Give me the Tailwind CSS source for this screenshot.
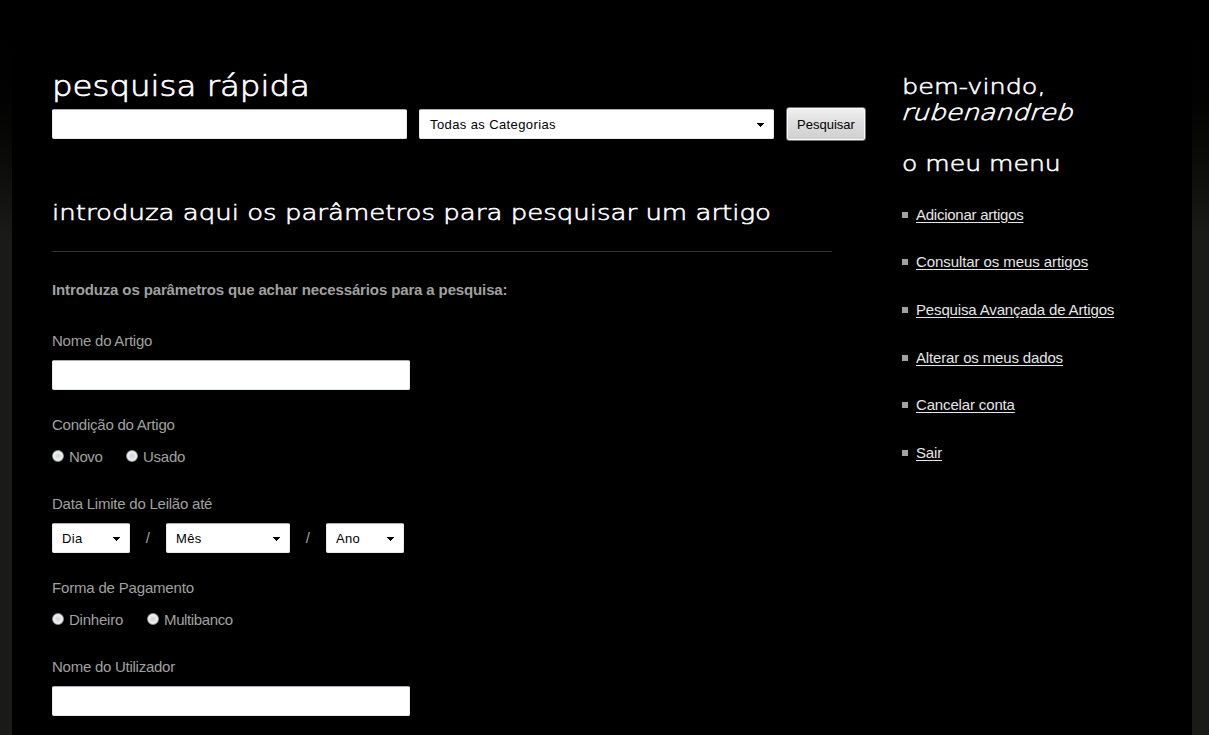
<!DOCTYPE html>
<html lang="pt">
<head>
<meta charset="utf-8">
<title>Pesquisa de artigos</title>
<script src="https://cdn.jsdelivr.net/npm/@tailwindcss/browser@4"></script>
</head>
<body class="h-[735px] overflow-hidden bg-[#1a1a18] bg-linear-to-b from-black from-0% to-[#1a1a18] to-[235px] px-3 pr-[17px] font-['Liberation_Sans',Arial,sans-serif] text-[15px] leading-5 text-[#a1a1a1]">
<div class="flex h-[735px] w-[1180px] bg-black pl-10">
  <main class="w-[850px] pt-[70px] tracking-[-0.23px]">
    <h1 class="h-[39px] whitespace-nowrap font-['DejaVu_Sans',sans-serif] text-[28px] leading-[34px] font-extralight tracking-normal text-white [-webkit-text-stroke:0.7px_white]"><span class="inline-block origin-left scale-x-[1.158]">pesquisa rápida</span></h1>
    <form class="-mt-[2px] flex h-[34px] items-center gap-3 text-[13px] tracking-normal text-black">
      <input aria-label="Pesquisa" class="h-[30px] w-[355px] rounded-[2px] border border-[#e3e9ef] border-t-[#abadb3] bg-white">
      <div class="flex h-[30px] w-[355px] items-center justify-between rounded-[2px] border border-[#e3e9ef] border-t-[#abadb3] bg-white pr-[9px] pl-[10px]"><span class="pt-0.5 tracking-[0.39px]">Todas as Categorias</span><svg class="mt-px h-1 w-[7px]" viewBox="0 0 7 4" shape-rendering="crispEdges"><path d="M0 0H7V1H6V2H5V3H4V4H3V3H2V2H1V1H0Z"/></svg></div>
      <button type="button" class="h-[34px] w-20 rounded-[3px] border border-[#707070] bg-linear-to-b from-[#f2f2f2] from-0% via-[#dddddd] via-50% to-[#cfcfcf] to-100% pt-px text-center shadow-[inset_0_0_0_1px_#fcfcfc]"><span>Pesquisar</span></button>
    </form>
    <h2 class="mt-[57px] h-[54px] w-[780px] whitespace-nowrap border-b border-[#333] pt-px font-['DejaVu_Sans',sans-serif] text-[22px] leading-7 font-extralight tracking-normal text-white [-webkit-text-stroke:0.6px_white]"><span class="inline-block origin-left scale-x-[1.182]">introduza aqui os parâmetros para pesquisar um artigo</span></h2>
    <p class="mt-7 font-bold tracking-[-0.13px]"><span>Introduza os parâmetros que achar necessários para a pesquisa:</span></p>
    <label class="mt-[31px] block"><span>Nome do Artigo</span></label>
    <input aria-label="Nome do Artigo" class="mt-[9px] block h-[30px] w-[358px] rounded-[2px] border border-[#e3e9ef] border-t-[#abadb3] bg-white">
    <p class="mt-[25px]"><span>Condição do Artigo</span></p>
    <div class="mt-3 flex h-5 items-center gap-[25px]">
      <label class="flex items-center gap-[5px]"><i class="-mt-[2px] size-3 rounded-full border border-[#8e8f8f] bg-radial from-[#cfd3d8] to-[#f4f4f4] to-70% shadow-[inset_0_0_0_1px_#f4f4f4]"></i><span class="w-8 tracking-[-0.4px]">Novo</span></label>
      <label class="flex items-center gap-[5px]"><i class="-mt-[2px] size-3 rounded-full border border-[#8e8f8f] bg-radial from-[#cfd3d8] to-[#f4f4f4] to-70% shadow-[inset_0_0_0_1px_#f4f4f4]"></i><span>Usado</span></label>
    </div>
    <p class="mt-[27px]"><span>Data Limite do Leilão até</span></p>
    <div class="mt-[9px] flex h-[30px] items-center text-[13px] tracking-[0.3px] text-black">
      <div class="flex h-[30px] w-[78px] items-center justify-between rounded-[2px] border border-[#e3e9ef] border-t-[#abadb3] bg-white pr-[9px] pl-[9px]"><span class="pt-0.5">Dia</span><svg class="mt-px h-1 w-[7px]" viewBox="0 0 7 4" shape-rendering="crispEdges"><path d="M0 0H7V1H6V2H5V3H4V4H3V3H2V2H1V1H0Z"/></svg></div>
      <span class="w-9 text-center text-[15px] text-[#a1a1a1]">/</span>
      <div class="flex h-[30px] w-[124px] items-center justify-between rounded-[2px] border border-[#e3e9ef] border-t-[#abadb3] bg-white pr-[9px] pl-[9px]"><span class="pt-0.5">Mês</span><svg class="mt-px h-1 w-[7px]" viewBox="0 0 7 4" shape-rendering="crispEdges"><path d="M0 0H7V1H6V2H5V3H4V4H3V3H2V2H1V1H0Z"/></svg></div>
      <span class="w-9 text-center text-[15px] text-[#a1a1a1]">/</span>
      <div class="flex h-[30px] w-[78px] items-center justify-between rounded-[2px] border border-[#e3e9ef] border-t-[#abadb3] bg-white pr-[9px] pl-[9px]"><span class="pt-0.5">Ano</span><svg class="mt-px h-1 w-[7px]" viewBox="0 0 7 4" shape-rendering="crispEdges"><path d="M0 0H7V1H6V2H5V3H4V4H3V3H2V2H1V1H0Z"/></svg></div>
    </div>
    <p class="mt-[25px]"><span class="tracking-[-0.18px]">Forma de Pagamento</span></p>
    <div class="mt-3 flex h-5 items-center gap-6">
      <label class="flex items-center gap-[5px]"><i class="-mt-[2px] size-3 rounded-full border border-[#8e8f8f] bg-radial from-[#cfd3d8] to-[#f4f4f4] to-70% shadow-[inset_0_0_0_1px_#f4f4f4]"></i><span>Dinheiro</span></label>
      <label class="flex items-center gap-[5px]"><i class="-mt-[2px] size-3 rounded-full border border-[#8e8f8f] bg-radial from-[#cfd3d8] to-[#f4f4f4] to-70% shadow-[inset_0_0_0_1px_#f4f4f4]"></i><span class="tracking-[-0.38px]">Multibanco</span></label>
    </div>
    <label class="mt-[27px] block"><span class="tracking-[-0.26px]">Nome do Utilizador</span></label>
    <input aria-label="Nome do Utilizador" class="mt-[9px] block h-[30px] w-[358px] rounded-[2px] border border-[#e3e9ef] border-t-[#abadb3] bg-white">
  </main>
  <aside class="w-[280px] pt-[74px]">
    <h2 class="whitespace-nowrap font-['DejaVu_Sans',sans-serif] text-[22px] leading-[26px] font-extralight text-white [-webkit-text-stroke:0.6px_white]"><span class="block w-max origin-left scale-x-[1.16]">bem-vindo,</span><em class="ml-px block w-max origin-left scale-x-[1.21] -skew-x-[16deg] not-italic">rubenandreb</em></h2>
    <h2 class="mt-[25px] whitespace-nowrap font-['DejaVu_Sans',sans-serif] text-[22px] leading-[26px] font-extralight text-white [-webkit-text-stroke:0.6px_white]"><span class="block w-max origin-left scale-x-[1.14]">o meu menu</span></h2>
    <ul class="mt-[27.8px] flex flex-col gap-[27.6px] tracking-[-0.15px] text-[#e6e6e6]">
      <li class="flex h-5 items-center gap-2"><i class="size-1.5 bg-[#a1a1a1]"></i><a class="tracking-[-0.25px] underline underline-offset-2">Adicionar artigos</a></li>
      <li class="flex h-5 items-center gap-2"><i class="size-1.5 bg-[#a1a1a1]"></i><a class="tracking-[-0.08px] underline underline-offset-2">Consultar os meus artigos</a></li>
      <li class="flex h-5 items-center gap-2"><i class="size-1.5 bg-[#a1a1a1]"></i><a class="underline underline-offset-2">Pesquisa Avançada de Artigos</a></li>
      <li class="flex h-5 items-center gap-2"><i class="size-1.5 bg-[#a1a1a1]"></i><a class="underline underline-offset-2">Alterar os meus dados</a></li>
      <li class="flex h-5 items-center gap-2"><i class="size-1.5 bg-[#a1a1a1]"></i><a class="underline underline-offset-2">Cancelar conta</a></li>
      <li class="flex h-5 items-center gap-2"><i class="size-1.5 bg-[#a1a1a1]"></i><a class="underline underline-offset-2">Sair</a></li>
    </ul>
  </aside>
</div>
</body>
</html>
